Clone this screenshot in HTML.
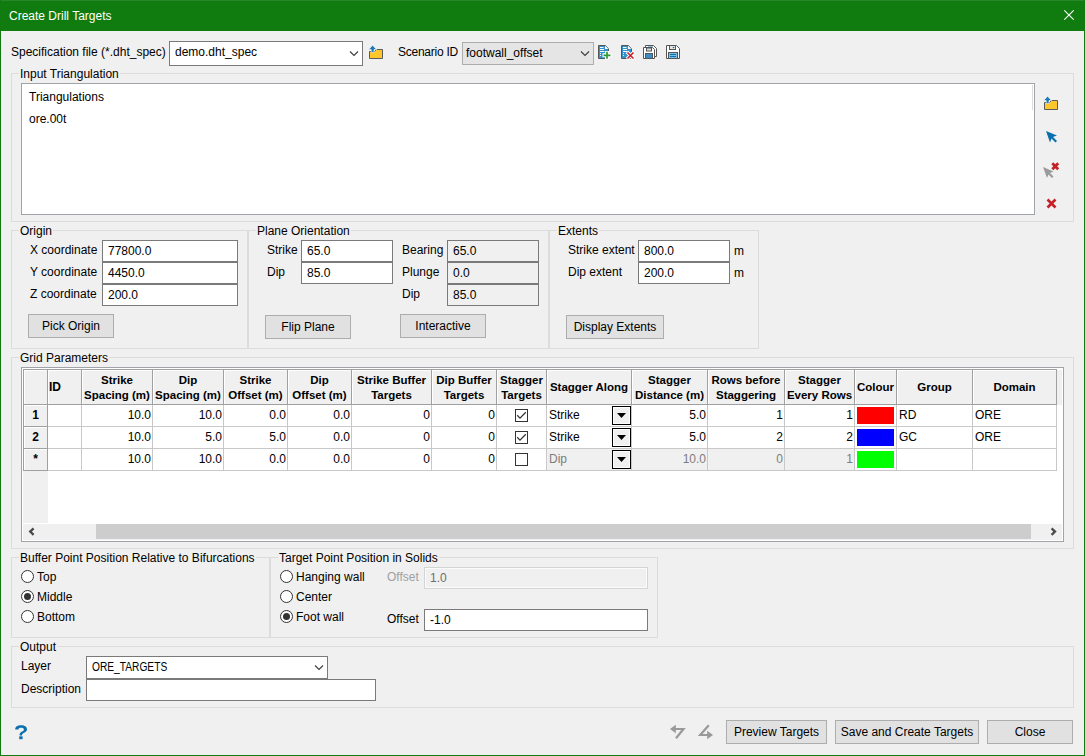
<!DOCTYPE html>
<html><head><meta charset="utf-8"><style>
html,body{margin:0;padding:0;}
body{width:1085px;height:756px;overflow:hidden;background:#f0f0f0;position:relative;font-family:"Liberation Sans",sans-serif;font-size:12px;color:#000;}
.t{position:absolute;white-space:nowrap;font-size:12px;line-height:14px;}
.gl{background:#f0f0f0;padding:0 1px;}
.btn{position:absolute;box-sizing:border-box;border:1px solid #adadad;background:#e1e1e1;text-align:center;white-space:nowrap;font-size:12px;}
svg{position:absolute;overflow:visible;}
.hd{position:absolute;font-weight:bold;font-size:11.5px;line-height:15px;text-align:center;white-space:nowrap;}
.c{position:absolute;white-space:nowrap;font-size:12px;line-height:14px;}
</style></head><body>

<div style="position:absolute;left:0px;top:0px;width:1085px;height:31px;box-sizing:border-box;background:#107c10;"></div>
<div style="position:absolute;left:0px;top:0px;width:1085px;height:1px;box-sizing:border-box;background:#2a862a;"></div>
<div style="position:absolute;left:0px;top:0px;width:1px;height:756px;box-sizing:border-box;background:#107c10;"></div>
<div style="position:absolute;left:1084px;top:0px;width:1px;height:756px;box-sizing:border-box;background:#107c10;"></div>
<div style="position:absolute;left:0px;top:755px;width:1085px;height:1px;box-sizing:border-box;background:#107c10;"></div>
<div class="t" style="left:9px;top:9px;color:#fff;">Create Drill Targets</div>
<svg style="left:0;top:0" width="1085" height="40"><path d="M1064.3 10.3L1073.7 19.7M1073.7 10.3L1064.3 19.7" stroke="#fff" stroke-width="1.1"/></svg>
<div class="t" style="left:11px;top:45px;">Specification file (*.dht_spec)</div>
<div style="position:absolute;left:169px;top:41px;width:194px;height:25px;box-sizing:border-box;border:1px solid #7a7a7a;background:#fff;"></div>
<div class="t" style="left:175px;top:45px;">demo.dht_spec</div>
<svg style="left:0;top:0" width="1" height="1"><path d="M350 51.5L354 55.5L358 51.5" fill="none" stroke="#3c3c3c" stroke-width="1.1"/></svg>
<svg style="left:369px;top:45px" width="15" height="15" viewBox="0 0 15 15"><path d="M0.5 13.5V6.5H5.5L7.5 4.5H13.5V13.5Z" fill="#ffc72c" stroke="#5a5a5a" stroke-width="1"/><path d="M3.6 0.3L7.6 4.6H5V7.4H2.2V4.6H-0.4Z" fill="#1a7ab5" stroke="#f0f0f0" stroke-width="0.7"/></svg>
<div class="t" style="left:398px;top:45px;letter-spacing:-0.25px;">Scenario ID</div>
<div style="position:absolute;left:462px;top:42px;width:132px;height:23px;box-sizing:border-box;border:1px solid #adadad;background:#e5e5e5;"></div>
<div class="t" style="left:466px;top:46px;">footwall_offset</div>
<svg style="left:0;top:0" width="1" height="1"><path d="M581 51.5L585 55.5L589 51.5" fill="none" stroke="#3c3c3c" stroke-width="1.1"/></svg>
<svg style="left:598px;top:45px" width="16" height="16" viewBox="0 0 16 16"><path d="M0.5 0.5H7.2L10.5 3.8V13.5H0.5Z" fill="#3493cc" stroke="#555" stroke-width="1"/><path d="M7 1V4H10" fill="#fff" stroke="none"/><path d="M7.2 1L10 3.8H7.2Z" fill="#fff"/><path d="M2 2.5H5.5M2 4.5H6M2 6.5H6.5M2 8.5H3M2 10.5H3" stroke="#fff" stroke-width="1"/><path d="M9 6V14.5M4.5 10.3H13.5" stroke="#fff" stroke-width="4"/><path d="M9 6.8V13.8M5.5 10.3H12.5" stroke="#2e9a2e" stroke-width="1.7"/></svg>
<svg style="left:621px;top:45px" width="16" height="16" viewBox="0 0 16 16"><path d="M0.5 0.5H7.2L10.5 3.8V13.5H0.5Z" fill="#3493cc" stroke="#555" stroke-width="1"/><path d="M7 1V4H10" fill="#fff" stroke="none"/><path d="M7.2 1L10 3.8H7.2Z" fill="#fff"/><path d="M2 2.5H5.5M2 4.5H6M2 6.5H6.5M2 8.5H3M2 10.5H3" stroke="#fff" stroke-width="1"/><path d="M6 7L13 14M13 7L6 14" stroke="#fff" stroke-width="3.6"/><path d="M6.5 7.5L12.5 13.5M12.5 7.5L6.5 13.5" stroke="#c8202a" stroke-width="1.6"/></svg>
<svg style="left:643px;top:45px" width="15" height="15" viewBox="0 0 15 15"><path d="M2.5 0.5H10.5L13.5 3.5V11.5H2.5Z" fill="#fff" stroke="#555" stroke-width="1"/><rect x="5" y="1" width="5" height="2" fill="#8ec3e6"/><path d="M0.5 2.5H9.5L11.5 4.5V13.5H0.5Z" fill="#fff" stroke="#555" stroke-width="1"/><rect x="3.5" y="3" width="5" height="3" fill="#ddd" stroke="#555" stroke-width="1"/><rect x="2.5" y="8.5" width="7" height="5" fill="#3a8dc8" stroke="#555" stroke-width="1"/></svg>
<svg style="left:666px;top:45px" width="15" height="15" viewBox="0 0 15 15"><path d="M0.5 0.5H10.5L13.5 3.5V13.5H0.5Z" fill="#fff" stroke="#555" stroke-width="1"/><rect x="3.5" y="0.5" width="6" height="4" fill="#e6e6e6" stroke="#555" stroke-width="1"/><circle cx="7.5" cy="2.5" r="0.8" fill="#0a6fae"/><rect x="2.5" y="7.5" width="9" height="6" fill="#7cc0ea" stroke="#555" stroke-width="1"/><path d="M4 9.5H10M4 11.5H10" stroke="#0a6fae" stroke-width="1"/></svg>
<div style="position:absolute;left:11px;top:73px;width:1063px;height:149px;box-sizing:border-box;border:1px solid #dcdcdc;"></div>
<div class="t gl" style="left:19px;top:67px;">Input Triangulation</div>
<div style="position:absolute;left:21px;top:83px;width:1014px;height:132px;box-sizing:border-box;border:1px solid #a0a4a8;background:#fff;"></div>
<div style="position:absolute;left:1032px;top:85px;width:1px;height:25px;box-sizing:border-box;background:#dcdcdc;"></div>
<div class="t" style="left:29px;top:90px;">Triangulations</div>
<div class="t" style="left:29px;top:112px;">ore.00t</div>
<svg style="left:1044px;top:96px" width="15" height="15" viewBox="0 0 15 15"><path d="M0.5 13.5V6.5H5.5L7.5 4.5H13.5V13.5Z" fill="#ffc72c" stroke="#5a5a5a" stroke-width="1"/><path d="M3.6 0.3L7.6 4.6H5V7.4H2.2V4.6H-0.4Z" fill="#1a7ab5" stroke="#f0f0f0" stroke-width="0.7"/></svg>
<svg style="left:1046px;top:131px" width="12" height="12" viewBox="0 0 12 12"><path d="M0 0L11 4.5L7 6L11 10L9.5 11.5L5.5 7.5L4 11.5Z" fill="#0a6fae"/></svg>
<svg style="left:1043px;top:162px" width="17" height="17" viewBox="0 0 17 17"><path d="M0 5L10.5 9.5L7 11L10.5 14.5L9 16L5.5 12.5L4 16Z" fill="#9a9a9a"/><path d="M9.3 1.3L15.2 7.2M15.2 1.3L9.3 7.2" stroke="#c42026" stroke-width="2.8"/></svg>
<svg style="left:1046px;top:198px" width="11" height="11" viewBox="0 0 11 11"><path d="M1.5 1.5L9.5 9.5M9.5 1.5L1.5 9.5" stroke="#c42026" stroke-width="2.6"/></svg>
<div style="position:absolute;left:11px;top:230px;width:237px;height:119px;box-sizing:border-box;border:1px solid #dcdcdc;"></div>
<div class="t gl" style="left:19px;top:224px;">Origin</div>
<div class="t" style="left:30px;top:243px;">X coordinate</div>
<div style="position:absolute;left:102px;top:240px;width:136px;height:22px;box-sizing:border-box;border:1px solid #7a7a7a;background:#fff;"></div>
<div class="t" style="left:108px;top:244px;color:#000;">77800.0</div>
<div class="t" style="left:30px;top:265px;">Y coordinate</div>
<div style="position:absolute;left:102px;top:262px;width:136px;height:22px;box-sizing:border-box;border:1px solid #7a7a7a;background:#fff;"></div>
<div class="t" style="left:108px;top:266px;color:#000;">4450.0</div>
<div class="t" style="left:30px;top:287px;">Z coordinate</div>
<div style="position:absolute;left:102px;top:284px;width:136px;height:22px;box-sizing:border-box;border:1px solid #7a7a7a;background:#fff;"></div>
<div class="t" style="left:108px;top:288px;color:#000;">200.0</div>
<div class="btn" style="left:28px;top:314px;width:86px;height:24px;line-height:22px;">Pick Origin</div>
<div style="position:absolute;left:248px;top:230px;width:301px;height:119px;box-sizing:border-box;border:1px solid #dcdcdc;"></div>
<div class="t gl" style="left:256px;top:224px;">Plane Orientation</div>
<div class="t" style="left:267px;top:243px;">Strike</div>
<div style="position:absolute;left:301px;top:240px;width:92px;height:22px;box-sizing:border-box;border:1px solid #7a7a7a;background:#fff;"></div>
<div class="t" style="left:307px;top:244px;color:#000;">65.0</div>
<div class="t" style="left:267px;top:265px;">Dip</div>
<div style="position:absolute;left:301px;top:262px;width:92px;height:22px;box-sizing:border-box;border:1px solid #7a7a7a;background:#fff;"></div>
<div class="t" style="left:307px;top:266px;color:#000;">85.0</div>
<div class="t" style="left:402px;top:243px;">Bearing</div>
<div style="position:absolute;left:447px;top:240px;width:92px;height:22px;box-sizing:border-box;border:1px solid #7a7a7a;background:#f0f0f0;"></div>
<div class="t" style="left:453px;top:244px;color:#000;">65.0</div>
<div class="t" style="left:402px;top:265px;">Plunge</div>
<div style="position:absolute;left:447px;top:262px;width:92px;height:22px;box-sizing:border-box;border:1px solid #7a7a7a;background:#f0f0f0;"></div>
<div class="t" style="left:453px;top:266px;color:#000;">0.0</div>
<div class="t" style="left:402px;top:287px;">Dip</div>
<div style="position:absolute;left:447px;top:284px;width:92px;height:22px;box-sizing:border-box;border:1px solid #7a7a7a;background:#f0f0f0;"></div>
<div class="t" style="left:453px;top:288px;color:#000;">85.0</div>
<div class="btn" style="left:265px;top:315px;width:86px;height:24px;line-height:22px;">Flip Plane</div>
<div class="btn" style="left:400px;top:314px;width:86px;height:24px;line-height:22px;">Interactive</div>
<div style="position:absolute;left:549px;top:230px;width:210px;height:119px;box-sizing:border-box;border:1px solid #dcdcdc;"></div>
<div class="t gl" style="left:557px;top:224px;">Extents</div>
<div class="t" style="left:568px;top:243px;">Strike extent</div>
<div style="position:absolute;left:638px;top:240px;width:92px;height:22px;box-sizing:border-box;border:1px solid #7a7a7a;background:#fff;"></div>
<div class="t" style="left:644px;top:244px;color:#000;">800.0</div>
<div class="t" style="left:734px;top:244px;">m</div>
<div class="t" style="left:568px;top:265px;">Dip extent</div>
<div style="position:absolute;left:638px;top:262px;width:92px;height:22px;box-sizing:border-box;border:1px solid #7a7a7a;background:#fff;"></div>
<div class="t" style="left:644px;top:266px;color:#000;">200.0</div>
<div class="t" style="left:734px;top:266px;">m</div>
<div class="btn" style="left:566px;top:315px;width:98px;height:24px;line-height:22px;">Display Extents</div>
<div style="position:absolute;left:11px;top:357px;width:1063px;height:192px;box-sizing:border-box;border:1px solid #dcdcdc;"></div>
<div class="t gl" style="left:19px;top:351px;">Grid Parameters</div>
<div style="position:absolute;left:21px;top:367px;width:1043px;height:175px;box-sizing:border-box;border:1px solid #a0a4a8;background:#fff;"></div>
<div style="position:absolute;left:23px;top:369px;width:1034px;height:36px;box-sizing:border-box;background:#f0f0f0;"></div>
<div style="position:absolute;left:1057px;top:370px;width:5px;height:35px;box-sizing:border-box;background:#f0f0f0;"></div>
<div style="position:absolute;left:23px;top:369px;width:25px;height:154px;box-sizing:border-box;background:#f0f0f0;"></div>
<div style="position:absolute;left:546px;top:448px;width:309px;height:23px;box-sizing:border-box;background:#f0f0f0;"></div>
<div style="position:absolute;left:23px;top:369px;width:1034px;height:1px;box-sizing:border-box;background:#a0a0a0;"></div>
<div style="position:absolute;left:23px;top:404px;width:1034px;height:1px;box-sizing:border-box;background:#a0a0a0;"></div>
<div style="position:absolute;left:23px;top:426px;width:1034px;height:1px;box-sizing:border-box;background:#c8c8c8;"></div>
<div style="position:absolute;left:23px;top:448px;width:1034px;height:1px;box-sizing:border-box;background:#c8c8c8;"></div>
<div style="position:absolute;left:23px;top:470px;width:1034px;height:1px;box-sizing:border-box;background:#c8c8c8;"></div>
<div style="position:absolute;left:23px;top:369px;width:1px;height:102px;box-sizing:border-box;background:#c8c8c8;"></div>
<div style="position:absolute;left:47px;top:369px;width:1px;height:102px;box-sizing:border-box;background:#c8c8c8;"></div>
<div style="position:absolute;left:81px;top:369px;width:1px;height:102px;box-sizing:border-box;background:#c8c8c8;"></div>
<div style="position:absolute;left:152px;top:369px;width:1px;height:102px;box-sizing:border-box;background:#c8c8c8;"></div>
<div style="position:absolute;left:223px;top:369px;width:1px;height:102px;box-sizing:border-box;background:#c8c8c8;"></div>
<div style="position:absolute;left:287px;top:369px;width:1px;height:102px;box-sizing:border-box;background:#c8c8c8;"></div>
<div style="position:absolute;left:351px;top:369px;width:1px;height:102px;box-sizing:border-box;background:#c8c8c8;"></div>
<div style="position:absolute;left:431px;top:369px;width:1px;height:102px;box-sizing:border-box;background:#c8c8c8;"></div>
<div style="position:absolute;left:496px;top:369px;width:1px;height:102px;box-sizing:border-box;background:#c8c8c8;"></div>
<div style="position:absolute;left:546px;top:369px;width:1px;height:102px;box-sizing:border-box;background:#c8c8c8;"></div>
<div style="position:absolute;left:631px;top:369px;width:1px;height:102px;box-sizing:border-box;background:#c8c8c8;"></div>
<div style="position:absolute;left:707px;top:369px;width:1px;height:102px;box-sizing:border-box;background:#c8c8c8;"></div>
<div style="position:absolute;left:784px;top:369px;width:1px;height:102px;box-sizing:border-box;background:#c8c8c8;"></div>
<div style="position:absolute;left:854px;top:369px;width:1px;height:102px;box-sizing:border-box;background:#c8c8c8;"></div>
<div style="position:absolute;left:896px;top:369px;width:1px;height:102px;box-sizing:border-box;background:#c8c8c8;"></div>
<div style="position:absolute;left:972px;top:369px;width:1px;height:102px;box-sizing:border-box;background:#c8c8c8;"></div>
<div style="position:absolute;left:1056px;top:369px;width:1px;height:102px;box-sizing:border-box;background:#c8c8c8;"></div>
<div style="position:absolute;left:23px;top:369px;width:1px;height:36px;box-sizing:border-box;background:#a0a0a0;"></div>
<div style="position:absolute;left:47px;top:369px;width:1px;height:36px;box-sizing:border-box;background:#a0a0a0;"></div>
<div style="position:absolute;left:81px;top:369px;width:1px;height:36px;box-sizing:border-box;background:#a0a0a0;"></div>
<div style="position:absolute;left:152px;top:369px;width:1px;height:36px;box-sizing:border-box;background:#a0a0a0;"></div>
<div style="position:absolute;left:223px;top:369px;width:1px;height:36px;box-sizing:border-box;background:#a0a0a0;"></div>
<div style="position:absolute;left:287px;top:369px;width:1px;height:36px;box-sizing:border-box;background:#a0a0a0;"></div>
<div style="position:absolute;left:351px;top:369px;width:1px;height:36px;box-sizing:border-box;background:#a0a0a0;"></div>
<div style="position:absolute;left:431px;top:369px;width:1px;height:36px;box-sizing:border-box;background:#a0a0a0;"></div>
<div style="position:absolute;left:496px;top:369px;width:1px;height:36px;box-sizing:border-box;background:#a0a0a0;"></div>
<div style="position:absolute;left:546px;top:369px;width:1px;height:36px;box-sizing:border-box;background:#a0a0a0;"></div>
<div style="position:absolute;left:631px;top:369px;width:1px;height:36px;box-sizing:border-box;background:#a0a0a0;"></div>
<div style="position:absolute;left:707px;top:369px;width:1px;height:36px;box-sizing:border-box;background:#a0a0a0;"></div>
<div style="position:absolute;left:784px;top:369px;width:1px;height:36px;box-sizing:border-box;background:#a0a0a0;"></div>
<div style="position:absolute;left:854px;top:369px;width:1px;height:36px;box-sizing:border-box;background:#a0a0a0;"></div>
<div style="position:absolute;left:896px;top:369px;width:1px;height:36px;box-sizing:border-box;background:#a0a0a0;"></div>
<div style="position:absolute;left:972px;top:369px;width:1px;height:36px;box-sizing:border-box;background:#a0a0a0;"></div>
<div style="position:absolute;left:1056px;top:369px;width:1px;height:36px;box-sizing:border-box;background:#a0a0a0;"></div>
<div style="position:absolute;left:23px;top:369px;width:1px;height:102px;box-sizing:border-box;background:#a0a0a0;"></div>
<div style="position:absolute;left:47px;top:369px;width:1px;height:102px;box-sizing:border-box;background:#a0a0a0;"></div>
<div style="position:absolute;left:23px;top:369px;width:25px;height:1px;box-sizing:border-box;background:#a0a0a0;"></div>
<div style="position:absolute;left:23px;top:404px;width:25px;height:1px;box-sizing:border-box;background:#a0a0a0;"></div>
<div style="position:absolute;left:23px;top:426px;width:25px;height:1px;box-sizing:border-box;background:#a0a0a0;"></div>
<div style="position:absolute;left:23px;top:448px;width:25px;height:1px;box-sizing:border-box;background:#a0a0a0;"></div>
<div style="position:absolute;left:23px;top:470px;width:25px;height:1px;box-sizing:border-box;background:#a0a0a0;"></div>
<div style="position:absolute;left:24px;top:370px;width:23px;height:1px;box-sizing:border-box;background:#fff;"></div>
<div style="position:absolute;left:24px;top:370px;width:1px;height:34px;box-sizing:border-box;background:#fff;"></div>
<div style="position:absolute;left:48px;top:370px;width:33px;height:1px;box-sizing:border-box;background:#fff;"></div>
<div style="position:absolute;left:48px;top:370px;width:1px;height:34px;box-sizing:border-box;background:#fff;"></div>
<div style="position:absolute;left:82px;top:370px;width:70px;height:1px;box-sizing:border-box;background:#fff;"></div>
<div style="position:absolute;left:82px;top:370px;width:1px;height:34px;box-sizing:border-box;background:#fff;"></div>
<div style="position:absolute;left:153px;top:370px;width:70px;height:1px;box-sizing:border-box;background:#fff;"></div>
<div style="position:absolute;left:153px;top:370px;width:1px;height:34px;box-sizing:border-box;background:#fff;"></div>
<div style="position:absolute;left:224px;top:370px;width:63px;height:1px;box-sizing:border-box;background:#fff;"></div>
<div style="position:absolute;left:224px;top:370px;width:1px;height:34px;box-sizing:border-box;background:#fff;"></div>
<div style="position:absolute;left:288px;top:370px;width:63px;height:1px;box-sizing:border-box;background:#fff;"></div>
<div style="position:absolute;left:288px;top:370px;width:1px;height:34px;box-sizing:border-box;background:#fff;"></div>
<div style="position:absolute;left:352px;top:370px;width:79px;height:1px;box-sizing:border-box;background:#fff;"></div>
<div style="position:absolute;left:352px;top:370px;width:1px;height:34px;box-sizing:border-box;background:#fff;"></div>
<div style="position:absolute;left:432px;top:370px;width:64px;height:1px;box-sizing:border-box;background:#fff;"></div>
<div style="position:absolute;left:432px;top:370px;width:1px;height:34px;box-sizing:border-box;background:#fff;"></div>
<div style="position:absolute;left:497px;top:370px;width:49px;height:1px;box-sizing:border-box;background:#fff;"></div>
<div style="position:absolute;left:497px;top:370px;width:1px;height:34px;box-sizing:border-box;background:#fff;"></div>
<div style="position:absolute;left:547px;top:370px;width:84px;height:1px;box-sizing:border-box;background:#fff;"></div>
<div style="position:absolute;left:547px;top:370px;width:1px;height:34px;box-sizing:border-box;background:#fff;"></div>
<div style="position:absolute;left:632px;top:370px;width:75px;height:1px;box-sizing:border-box;background:#fff;"></div>
<div style="position:absolute;left:632px;top:370px;width:1px;height:34px;box-sizing:border-box;background:#fff;"></div>
<div style="position:absolute;left:708px;top:370px;width:76px;height:1px;box-sizing:border-box;background:#fff;"></div>
<div style="position:absolute;left:708px;top:370px;width:1px;height:34px;box-sizing:border-box;background:#fff;"></div>
<div style="position:absolute;left:785px;top:370px;width:69px;height:1px;box-sizing:border-box;background:#fff;"></div>
<div style="position:absolute;left:785px;top:370px;width:1px;height:34px;box-sizing:border-box;background:#fff;"></div>
<div style="position:absolute;left:855px;top:370px;width:41px;height:1px;box-sizing:border-box;background:#fff;"></div>
<div style="position:absolute;left:855px;top:370px;width:1px;height:34px;box-sizing:border-box;background:#fff;"></div>
<div style="position:absolute;left:897px;top:370px;width:75px;height:1px;box-sizing:border-box;background:#fff;"></div>
<div style="position:absolute;left:897px;top:370px;width:1px;height:34px;box-sizing:border-box;background:#fff;"></div>
<div style="position:absolute;left:973px;top:370px;width:83px;height:1px;box-sizing:border-box;background:#fff;"></div>
<div style="position:absolute;left:973px;top:370px;width:1px;height:34px;box-sizing:border-box;background:#fff;"></div>
<div style="position:absolute;left:24px;top:405px;width:23px;height:1px;box-sizing:border-box;background:#fff;"></div>
<div style="position:absolute;left:24px;top:405px;width:1px;height:21px;box-sizing:border-box;background:#fff;"></div>
<div style="position:absolute;left:24px;top:427px;width:23px;height:1px;box-sizing:border-box;background:#fff;"></div>
<div style="position:absolute;left:24px;top:427px;width:1px;height:21px;box-sizing:border-box;background:#fff;"></div>
<div style="position:absolute;left:24px;top:449px;width:23px;height:1px;box-sizing:border-box;background:#fff;"></div>
<div style="position:absolute;left:24px;top:449px;width:1px;height:21px;box-sizing:border-box;background:#fff;"></div>
<div class="hd" style="left:49px;top:380px;text-align:left;font-size:12px;">ID</div>
<div class="hd" style="left:82px;width:70px;top:373px;">Strike<br>Spacing (m)</div>
<div class="hd" style="left:153px;width:70px;top:373px;">Dip<br>Spacing (m)</div>
<div class="hd" style="left:224px;width:63px;top:373px;">Strike<br>Offset (m)</div>
<div class="hd" style="left:288px;width:63px;top:373px;">Dip<br>Offset (m)</div>
<div class="hd" style="left:352px;width:79px;top:373px;">Strike Buffer<br>Targets</div>
<div class="hd" style="left:432px;width:64px;top:373px;">Dip Buffer<br>Targets</div>
<div class="hd" style="left:497px;width:49px;top:373px;">Stagger<br>Targets</div>
<div class="hd" style="left:547px;width:84px;top:380px;">Stagger Along</div>
<div class="hd" style="left:632px;width:75px;top:373px;">Stagger<br>Distance (m)</div>
<div class="hd" style="left:708px;width:76px;top:373px;">Rows before<br>Staggering</div>
<div class="hd" style="left:785px;width:69px;top:373px;">Stagger<br>Every Rows</div>
<div class="hd" style="left:855px;width:41px;top:380px;">Colour</div>
<div class="hd" style="left:897px;width:75px;top:380px;">Group</div>
<div class="hd" style="left:973px;width:83px;top:380px;">Domain</div>
<div class="hd" style="left:24px;width:23px;top:408px;font-size:12px;">1</div>
<div class="hd" style="left:24px;width:23px;top:430px;font-size:12px;">2</div>
<div class="hd" style="left:24px;width:23px;top:452px;font-size:12px;">*</div>
<div class="c" style="left:81px;width:70px;top:408px;text-align:right;color:#000;">10.0</div>
<div class="c" style="left:152px;width:70px;top:408px;text-align:right;color:#000;">10.0</div>
<div class="c" style="left:223px;width:63px;top:408px;text-align:right;color:#000;">0.0</div>
<div class="c" style="left:287px;width:63px;top:408px;text-align:right;color:#000;">0.0</div>
<div class="c" style="left:351px;width:79px;top:408px;text-align:right;color:#000;">0</div>
<div class="c" style="left:431px;width:64px;top:408px;text-align:right;color:#000;">0</div>
<div style="position:absolute;left:515px;top:409px;width:13px;height:13px;box-sizing:border-box;border:1px solid #333;background:#fff;"></div>
<svg style="left:515px;top:409px" width="13" height="13"><path d="M2.2 6.3L5 9.1L10.8 3.3" fill="none" stroke="#333" stroke-width="1.25"/></svg>
<div class="c" style="left:549px;top:408px;color:#000;">Strike</div>
<div style="position:absolute;left:612px;top:406px;width:19px;height:19px;box-sizing:border-box;border:1px solid #000;box-shadow:inset 0 0 0 1px #fff;background:#f0f0f0;"></div>
<svg style="left:612px;top:406px" width="19" height="19"><path d="M5 7H14L9.5 12Z" fill="#000"/></svg>
<div class="c" style="left:631px;width:75px;top:408px;text-align:right;color:#000;">5.0</div>
<div class="c" style="left:707px;width:76px;top:408px;text-align:right;color:#000;">1</div>
<div class="c" style="left:784px;width:69px;top:408px;text-align:right;color:#000;">1</div>
<div style="position:absolute;left:857px;top:407px;width:37px;height:17px;background:red;"></div>
<div class="c" style="left:899px;top:408px;">RD</div>
<div class="c" style="left:975px;top:408px;">ORE</div>
<div class="c" style="left:81px;width:70px;top:430px;text-align:right;color:#000;">10.0</div>
<div class="c" style="left:152px;width:70px;top:430px;text-align:right;color:#000;">5.0</div>
<div class="c" style="left:223px;width:63px;top:430px;text-align:right;color:#000;">5.0</div>
<div class="c" style="left:287px;width:63px;top:430px;text-align:right;color:#000;">0.0</div>
<div class="c" style="left:351px;width:79px;top:430px;text-align:right;color:#000;">0</div>
<div class="c" style="left:431px;width:64px;top:430px;text-align:right;color:#000;">0</div>
<div style="position:absolute;left:515px;top:431px;width:13px;height:13px;box-sizing:border-box;border:1px solid #333;background:#fff;"></div>
<svg style="left:515px;top:431px" width="13" height="13"><path d="M2.2 6.3L5 9.1L10.8 3.3" fill="none" stroke="#333" stroke-width="1.25"/></svg>
<div class="c" style="left:549px;top:430px;color:#000;">Strike</div>
<div style="position:absolute;left:612px;top:428px;width:19px;height:19px;box-sizing:border-box;border:1px solid #000;box-shadow:inset 0 0 0 1px #fff;background:#f0f0f0;"></div>
<svg style="left:612px;top:428px" width="19" height="19"><path d="M5 7H14L9.5 12Z" fill="#000"/></svg>
<div class="c" style="left:631px;width:75px;top:430px;text-align:right;color:#000;">5.0</div>
<div class="c" style="left:707px;width:76px;top:430px;text-align:right;color:#000;">2</div>
<div class="c" style="left:784px;width:69px;top:430px;text-align:right;color:#000;">2</div>
<div style="position:absolute;left:857px;top:429px;width:37px;height:17px;background:blue;"></div>
<div class="c" style="left:899px;top:430px;">GC</div>
<div class="c" style="left:975px;top:430px;">ORE</div>
<div class="c" style="left:81px;width:70px;top:452px;text-align:right;color:#000;">10.0</div>
<div class="c" style="left:152px;width:70px;top:452px;text-align:right;color:#000;">10.0</div>
<div class="c" style="left:223px;width:63px;top:452px;text-align:right;color:#000;">0.0</div>
<div class="c" style="left:287px;width:63px;top:452px;text-align:right;color:#000;">0.0</div>
<div class="c" style="left:351px;width:79px;top:452px;text-align:right;color:#000;">0</div>
<div class="c" style="left:431px;width:64px;top:452px;text-align:right;color:#000;">0</div>
<div style="position:absolute;left:515px;top:453px;width:13px;height:13px;box-sizing:border-box;border:1px solid #333;background:#fff;"></div>
<div class="c" style="left:549px;top:452px;color:#7d7d7d;">Dip</div>
<div style="position:absolute;left:612px;top:450px;width:19px;height:19px;box-sizing:border-box;border:1px solid #000;box-shadow:inset 0 0 0 1px #fff;background:#f0f0f0;"></div>
<svg style="left:612px;top:450px" width="19" height="19"><path d="M5 7H14L9.5 12Z" fill="#000"/></svg>
<div class="c" style="left:631px;width:75px;top:452px;text-align:right;color:#7d7d7d;">10.0</div>
<div class="c" style="left:707px;width:76px;top:452px;text-align:right;color:#7d7d7d;">0</div>
<div class="c" style="left:784px;width:69px;top:452px;text-align:right;color:#7d7d7d;">1</div>
<div style="position:absolute;left:857px;top:451px;width:37px;height:17px;background:lime;"></div>
<div style="position:absolute;left:23px;top:524px;width:1039px;height:16px;box-sizing:border-box;background:#f0f0f0;"></div>
<div style="position:absolute;left:96px;top:524px;width:935px;height:15px;box-sizing:border-box;background:#cdcdcd;"></div>
<svg style="left:0;top:0" width="1" height="1"><path d="M33.6 528.3L30.2 531.6L33.6 534.9" fill="none" stroke="#4a4a4a" stroke-width="2.3"/><path d="M1051.6 528.3L1055 531.6L1051.6 534.9" fill="none" stroke="#4a4a4a" stroke-width="2.3"/></svg>
<div style="position:absolute;left:11px;top:557px;width:259px;height:81px;box-sizing:border-box;border:1px solid #dcdcdc;"></div>
<div class="t gl" style="left:19px;top:551px;">Buffer Point Position Relative to Bifurcations</div>
<svg style="left:21px;top:570px" width="13" height="13"><circle cx="6.5" cy="6.5" r="6" fill="#fff" stroke="#333" stroke-width="1"/></svg>
<div class="t" style="left:37px;top:570px;">Top</div>
<svg style="left:21px;top:590px" width="13" height="13"><circle cx="6.5" cy="6.5" r="6" fill="#fff" stroke="#333" stroke-width="1"/><circle cx="6.5" cy="6.5" r="3.5" fill="#333"/></svg>
<div class="t" style="left:37px;top:590px;">Middle</div>
<svg style="left:21px;top:610px" width="13" height="13"><circle cx="6.5" cy="6.5" r="6" fill="#fff" stroke="#333" stroke-width="1"/></svg>
<div class="t" style="left:37px;top:610px;">Bottom</div>
<div style="position:absolute;left:270px;top:557px;width:388px;height:81px;box-sizing:border-box;border:1px solid #dcdcdc;"></div>
<div class="t gl" style="left:278px;top:551px;">Target Point Position in Solids</div>
<svg style="left:280px;top:570px" width="13" height="13"><circle cx="6.5" cy="6.5" r="6" fill="#fff" stroke="#333" stroke-width="1"/></svg>
<div class="t" style="left:296px;top:570px;">Hanging wall</div>
<svg style="left:280px;top:590px" width="13" height="13"><circle cx="6.5" cy="6.5" r="6" fill="#fff" stroke="#333" stroke-width="1"/></svg>
<div class="t" style="left:296px;top:590px;">Center</div>
<svg style="left:280px;top:610px" width="13" height="13"><circle cx="6.5" cy="6.5" r="6" fill="#fff" stroke="#333" stroke-width="1"/><circle cx="6.5" cy="6.5" r="3.5" fill="#333"/></svg>
<div class="t" style="left:296px;top:610px;">Foot wall</div>
<div class="t" style="left:387px;top:570px;color:#a0a0a0;">Offset</div>
<div style="position:absolute;left:424px;top:567px;width:224px;height:22px;box-sizing:border-box;border:1px solid #d4d4d4;box-shadow:inset 0 0 0 1px #fbfbfb;background:#f0f0f0;"></div>
<div class="t" style="left:430px;top:571px;color:#6d6d6d;">1.0</div>
<div class="t" style="left:387px;top:612px;">Offset</div>
<div style="position:absolute;left:424px;top:609px;width:224px;height:22px;box-sizing:border-box;border:1px solid #7a7a7a;background:#fff;"></div>
<div class="t" style="left:430px;top:613px;color:#000;">-1.0</div>
<div style="position:absolute;left:11px;top:646px;width:1063px;height:62px;box-sizing:border-box;border:1px solid #dcdcdc;"></div>
<div class="t gl" style="left:19px;top:640px;">Output</div>
<div class="t" style="left:21px;top:659px;">Layer</div>
<div style="position:absolute;left:86px;top:656px;width:242px;height:23px;box-sizing:border-box;border:1px solid #7a7a7a;background:#fff;"></div>
<div class="t" style="left:92px;top:660px;transform:scaleX(0.85);transform-origin:0 0;">ORE_TARGETS</div>
<svg style="left:0;top:0" width="1" height="1"><path d="M315 665.5L319 669.5L323 665.5" fill="none" stroke="#3c3c3c" stroke-width="1.1"/></svg>
<div class="t" style="left:21px;top:682px;">Description</div>
<div style="position:absolute;left:86px;top:679px;width:290px;height:22px;box-sizing:border-box;border:1px solid #7a7a7a;background:#fff;"></div>
<svg style="left:0;top:0" width="1" height="1"><path d="M15.2 729.4C15.2 726.5 17.8 725.3 21.1 725.3C24.8 725.3 27 726.9 27 729.3C27 731.4 25.5 732.2 23.8 733.1C22.4 733.8 22 734.4 22 735.4H19.6C19.6 733.6 20.3 732.5 22 731.6C23.4 730.8 23.9 730.3 23.9 729.4C23.9 728.3 22.8 727.7 21.1 727.7C19.3 727.7 18.4 728.4 18.4 729.4Z" fill="#0a6fae"/><rect x="19.2" y="736.3" width="3.4" height="2.9" fill="#0a6fae"/></svg>
<svg style="left:0;top:0" width="1" height="1"><path d="M670 729L675.8 724.8V733.2Z" fill="#999"/><path d="M675 729H683.5L676 738.3" fill="none" stroke="#999" stroke-width="2.2" stroke-linejoin="miter"/><path d="M708.8 725.3L700.2 735H708" fill="none" stroke="#999" stroke-width="2.2"/><path d="M713 735L707.2 730.8V739.2Z" fill="#999"/></svg>
<div class="btn" style="left:726px;top:720px;width:101px;height:24px;line-height:22px;">Preview Targets</div>
<div class="btn" style="left:835px;top:720px;width:144px;height:24px;line-height:22px;">Save and Create Targets</div>
<div class="btn" style="left:987px;top:720px;width:86px;height:24px;line-height:22px;">Close</div>
</body></html>
